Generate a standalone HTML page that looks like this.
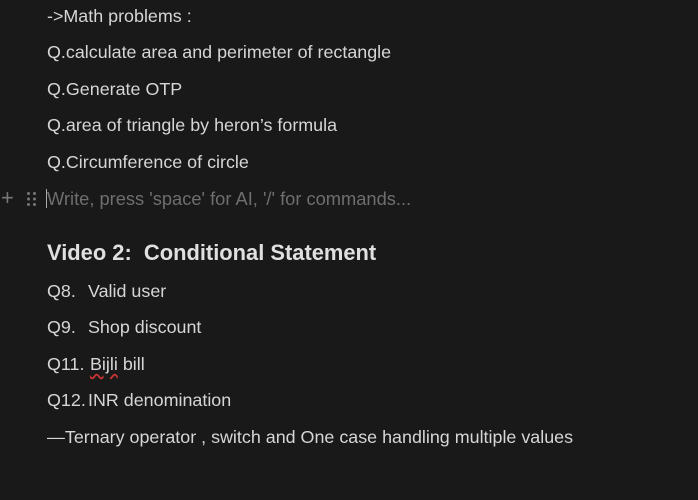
<!DOCTYPE html>
<html><head><meta charset="utf-8"><style>
html,body{margin:0;padding:0;background:#191919;width:698px;height:500px;overflow:hidden}
body{font-family:"Liberation Sans",sans-serif;color:#d6d6d6;font-size:17.9px;position:relative}
.l{position:absolute;left:47px;white-space:nowrap;line-height:20px}
.ph{color:#6e6e6e;font-size:18.3px}
.h{font-weight:bold;font-size:21.9px;color:#e0e0e0}
.p{display:inline-block;width:41px}
</style></head><body>
<div class="l" style="top:6px">-&gt;Math problems :</div>
<div class="l" style="top:42px">Q.calculate area and perimeter of rectangle</div>
<div class="l" style="top:79px">Q.Generate OTP</div>
<div class="l" style="top:115px">Q.area of triangle by heron’s formula</div>
<div class="l" style="top:152px">Q.Circumference of circle</div>
<div style="position:absolute;left:1px;top:186px;color:#777;font-size:22px;line-height:24px">+</div>
<svg style="position:absolute;left:26px;top:191px" width="12" height="16"><g fill="#777"><circle cx="2.5" cy="2.5" r="1.5"/><circle cx="8.5" cy="2.5" r="1.5"/><circle cx="2.5" cy="8" r="1.5"/><circle cx="8.5" cy="8" r="1.5"/><circle cx="2.5" cy="13.5" r="1.5"/><circle cx="8.5" cy="13.5" r="1.5"/></g></svg>
<div style="position:absolute;left:46px;top:189px;width:1px;height:19px;background:#aaa"></div>
<div class="l ph" style="top:189px">Write, press 'space' for AI, '/' for commands...</div>
<div class="l h" style="top:243px">Video 2:&nbsp; Conditional Statement</div>
<div class="l" style="top:281px"><span class="p">Q8.</span>Valid user</div>
<div class="l" style="top:317px"><span class="p">Q9.</span>Shop discount</div>
<div class="l" style="top:354px"><span class="p" style="width:43px">Q11.</span><span style="text-decoration:underline wavy #c33;text-underline-offset:3px">Bijli</span> bill</div>
<div class="l" style="top:390px"><span class="p" style="width:41px">Q12.</span>INR denomination</div>
<div class="l" style="top:427px">—Ternary operator , switch and One case handling multiple values</div>
</body></html>
